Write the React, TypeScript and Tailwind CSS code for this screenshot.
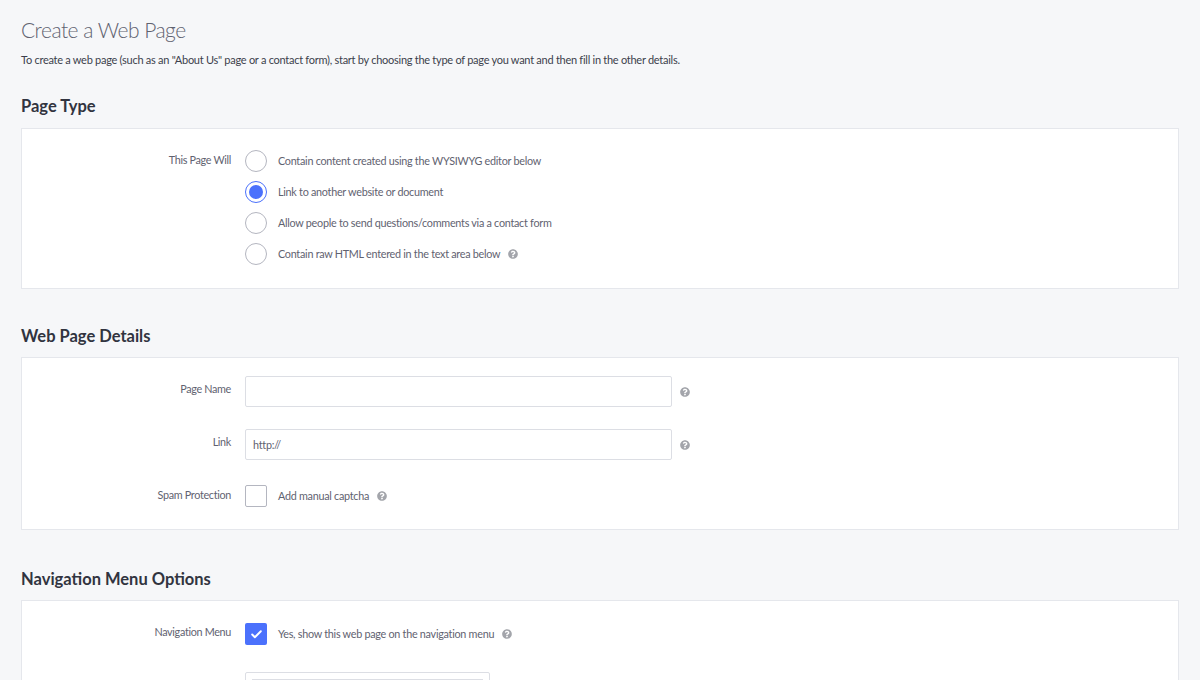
import { FaQuestionCircle } from "react-icons/fa";
import { Check } from "lucide-react";

const font = "font-['Lato','Noto_Sans',sans-serif]";
const body = "text-[10.8px] leading-[16px] tracking-[-0.27px] text-[#5f6270]";

function Help({ className = "" }: { className?: string }) {
  return <FaQuestionCircle className={`h-[10px] w-[10px] shrink-0 text-[#a3a5ab] ${className}`} />;
}

function Row({
  label,
  labelClass = "pt-[2px]",
  children,
  className = "",
}: {
  label?: string;
  labelClass?: string;
  children: React.ReactNode;
  className?: string;
}) {
  return (
    <div className={`flex items-start ${className}`}>
      <div className={`w-[209px] shrink-0 text-right ${body} tracking-[-0.32px] ${labelClass}`}>{label}</div>
      <div className="ml-[14px] flex items-center">{children}</div>
    </div>
  );
}

function Radio({ checked, text, help }: { checked?: boolean; text: string; help?: boolean }) {
  return (
    <div className="flex h-[22px] items-center">
      <span
        className={`flex h-[22px] w-[22px] shrink-0 items-center justify-center rounded-full border ${
          checked ? "border-[#4b71fc]" : "border-[#b4b6c0]"
        } bg-white`}
      >
        {checked && <span className="h-[14px] w-[14px] rounded-full bg-[#4b71fc]" />}
      </span>
      <span className={`ml-[11px] ${body}`}>{text}</span>
      {help && <Help className="ml-[8px]" />}
    </div>
  );
}

function Section({
  title,
  children,
  className = "",
  gap = "mt-[11px]",
}: {
  title: string;
  children: React.ReactNode;
  className?: string;
  gap?: string;
}) {
  return (
    <section className={className}>
      <h2 className="h-[22px] text-[16.5px] leading-[22px] font-bold text-[#313440]">{title}</h2>
      <div className={`${gap} border border-[#e5e7ec] bg-white`}>{children}</div>
    </section>
  );
}

export default function App() {
  return (
    <div className={`h-[680px] overflow-hidden bg-[#f6f7f9] px-[21px] pt-[17px] ${font}`}>
      <h1 className="h-[25px] text-[21px] leading-[25px] font-light tracking-[-0.5px] text-[#5f6270]">Create a Web Page</h1>
      <p className="mt-[10px] h-[16px] text-[11px] leading-[16px] tracking-[-0.27px] text-[#3c3f4c]">
        To create a web page (such as an "About Us" page or a contact form), start by choosing the type of page you want
        and then fill in the other details.
      </p>

      <Section title="Page Type" className="mt-[27px]">
        <div className="h-[159px] pt-[21px]">
          <div className="flex flex-col gap-[9px]">
            <Row label="This Page Will">
              <Radio text="Contain content created using the WYSIWYG editor below" />
            </Row>
            <Row>
              <Radio checked text="Link to another website or document" />
            </Row>
            <Row>
              <Radio text="Allow people to send questions/comments via a contact form" />
            </Row>
            <Row>
              <Radio text="Contain raw HTML entered in the text area below" help />
            </Row>
          </div>
        </div>
      </Section>

      <Section title="Web Page Details" className="mt-[36px]" gap="mt-[10px]">
        <div className="h-[171px] pt-[18px]">
          <Row label="Page Name" labelClass="pt-[5px]">
            <div className="h-[31px] w-[427px] rounded-[2px] border border-[#dcdee4] bg-white" />
            <Help className="ml-[8px]" />
          </Row>
          <Row label="Link" labelClass="pt-[5px]" className="mt-[22px]">
            <div className={`flex h-[31px] w-[427px] items-center rounded-[2px] border border-[#dcdee4] bg-white px-[7px] ${body}`}>
              http://
            </div>
            <Help className="ml-[8px]" />
          </Row>
          <Row label="Spam Protection" labelClass="pt-[2px]" className="mt-[25px]">
            <span className="h-[22px] w-[22px] rounded-[2px] border border-[#b4b6c0] bg-white" />
            <span className={`ml-[11px] ${body}`}>Add manual captcha</span>
            <Help className="ml-[8px]" />
          </Row>
        </div>
      </Section>

      <Section title="Navigation Menu Options" className="mt-[38px]" gap="mt-[10px]">
        <div className="h-[200px] pt-[22px]">
          <Row label="Navigation Menu" labelClass="pt-[1px]">
            <span className="flex h-[22px] w-[22px] items-center justify-center rounded-[2px] bg-[#4b71fc]">
              <Check className="h-[13px] w-[13px] text-white" strokeWidth={3.5} />
            </span>
            <span className={`ml-[11px] ${body}`}>Yes, show this web page on the navigation menu</span>
            <Help className="ml-[8px]" />
          </Row>
          <Row className="mt-[27px]" labelClass="pt-0">
            <div className="h-[120px] w-[245px] rounded-[2px] border border-[#dcdee4] bg-white p-[6px]">
              <div className="h-full border border-[#dcdee4]" />
            </div>
          </Row>
        </div>
      </Section>
    </div>
  );
}
